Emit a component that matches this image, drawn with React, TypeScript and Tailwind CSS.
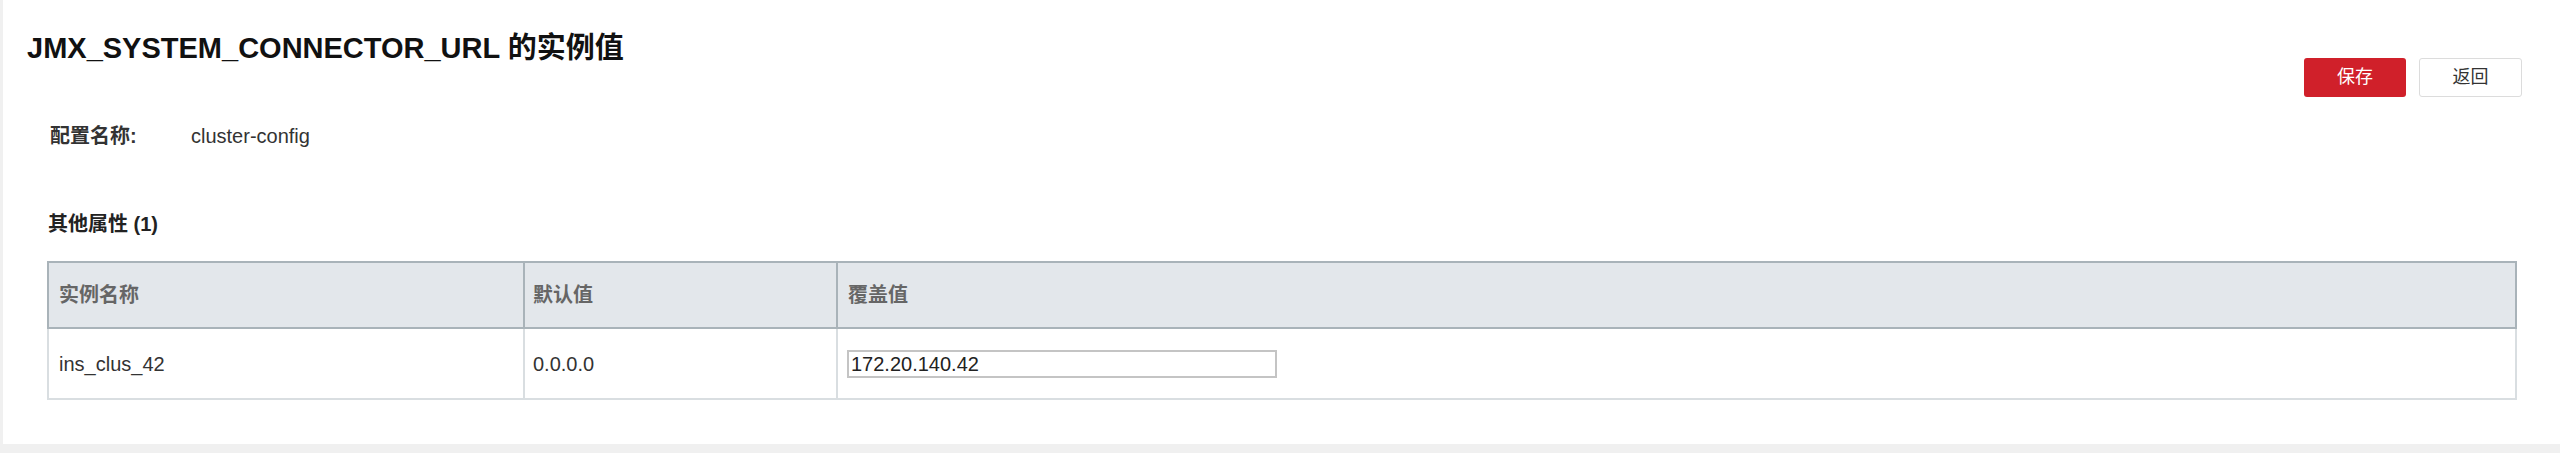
import React from "react";

export default function App() {
  const font = { fontFamily: '"Liberation Sans", Arial, "Noto Sans CJK SC", sans-serif' };
  return (
    <div className="h-[453px] w-[2560px] bg-[#f0f0f0] pl-[3px]" style={font}>
      <div className="h-[444px] bg-white pl-[24px] pr-[38px]">
        <div className="flex items-start justify-between">
          <h1 className="mt-[30px] text-[29px] leading-[36px] font-bold text-[#111]">
            JMX_SYSTEM_CONNECTOR_URL 的实例值
          </h1>
          <div className="mt-[58px] flex gap-[13px]">
            <button className="h-[39px] w-[102px] rounded-[3px] bg-[#d0202a] text-[18px] text-white">
              保存
            </button>
            <button className="h-[39px] w-[103px] rounded-[3px] border border-[#dcdcdc] bg-white text-[18px] text-[#333]">
              返回
            </button>
          </div>
        </div>

        <div className="mt-[25px] flex pl-[23px] text-[20px] leading-[28px] text-[#333]">
          <span className="w-[141px] font-bold">配置名称:</span>
          <span>cluster-config</span>
        </div>

        <div className="mt-[60px] pl-[21px] text-[20px] leading-[28px] font-bold text-[#222]">
          其他属性 (1)
        </div>

        <div className="mt-[23px] ml-[20px] mr-[5px]">
          <table className="w-full border-collapse text-[20px]">
            <thead>
              <tr className="h-[66px] bg-[#e3e7eb]">
                <th className="w-[476px] border-2 border-[#a9b3b9] pl-[10px] text-left font-bold text-[#666]">
                  实例名称
                </th>
                <th className="w-[313px] border-2 border-[#a9b3b9] pl-[8px] text-left font-bold text-[#666]">
                  默认值
                </th>
                <th className="border-2 border-[#a9b3b9] pl-[10px] text-left font-bold text-[#666]">
                  覆盖值
                </th>
              </tr>
            </thead>
            <tbody>
              <tr className="h-[71px]">
                <td className="border-2 border-[#d9dee1] pl-[10px] text-[#333]">ins_clus_42</td>
                <td className="border-2 border-[#d9dee1] pl-[8px] text-[#333]">0.0.0.0</td>
                <td className="border-2 border-[#d9dee1] pl-[9px]">
                  <input
                    className="h-[28px] w-[430px] border-2 border-[#c4c4c4] bg-white px-[2px] text-[20px] text-[#222] outline-none"
                    style={font}
                    defaultValue="172.20.140.42"
                  />
                </td>
              </tr>
            </tbody>
          </table>
        </div>
      </div>
    </div>
  );
}
